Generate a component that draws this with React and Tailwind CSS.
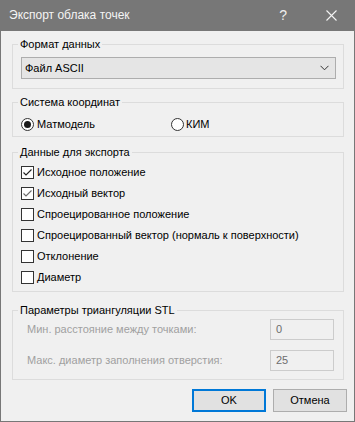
import React from "react";

const font = { fontFamily: '"Liberation Sans", Arial, sans-serif' };

function Check({ checked, light }) {
  return (
    <span className="w-[13px] h-[13px] border border-[#333333] bg-white flex items-center justify-center shrink-0">
      {checked && (
        <svg width="11" height="11" viewBox="0 0 11 11">
          <path d="M1.5 5.5 L4 8 L9.5 2.5" fill="none" stroke={light ? "#6b6b6b" : "#202020"} strokeWidth="1.1" />
        </svg>
      )}
    </span>
  );
}

function CheckRow({ label, checked, light }) {
  return (
    <div className="h-[21px] flex items-center">
      <Check checked={checked} light={light} />
      <span className="ml-[3px]">{label}</span>
    </div>
  );
}

function Radio({ checked }) {
  return (
    <span className="w-[13px] h-[13px] rounded-full border border-[#333333] bg-white flex items-center justify-center shrink-0">
      {checked && <span className="w-[7px] h-[7px] rounded-full bg-[#1a1a1a]" />}
    </span>
  );
}

function Group({ title, className, children }) {
  return (
    <fieldset className={"border border-[#dcdcdc] w-[332px] pl-[8px] pr-[7px] " + className}>
      <legend className="ml-[-3px] px-[2px] leading-[15px]">{title}</legend>
      {children}
    </fieldset>
  );
}

export default function App() {
  return (
    <div className="w-[355px] h-[422px] bg-[#f0f0f0] border-x border-b border-[#777777] flex flex-col text-[11px] text-black leading-[15px]" style={font}>
      <div className="h-[31px] bg-[#777777] flex items-center shrink-0 text-[#f4f4f4] text-[12px]">
        <span className="ml-[8px]">Экспорт облака точек</span>
        <span className="ml-auto mr-[39px] text-[14px] text-[#eeeeee]">?</span>
        <svg className="mr-[17px]" width="11" height="11" viewBox="0 0 11 11">
          <path d="M0.5 0.5 L10.5 10.5 M10.5 0.5 L0.5 10.5" stroke="#f4f4f4" strokeWidth="1.1" />
        </svg>
      </div>

      <div className="pl-[11px] flex flex-col">
        <Group title="Формат данных" className="mt-[6px] pt-[5px] pb-[9px]">
          <div className="h-[22px] border border-[#adadad] bg-[#e5e5e5] flex items-center pl-[3px] pr-[6px]">
            <span>Файл ASCII</span>
            <svg className="ml-auto" width="9" height="6" viewBox="0 0 9 6">
              <path d="M0.5 0.8 L4.5 4.8 L8.5 0.8" fill="none" stroke="#333333" strokeWidth="1" />
            </svg>
          </div>
        </Group>

        <Group title="Система координат" className="mt-[6px] pt-[4px] pb-[2px]">
          <div className="h-[20px] flex items-center">
            <div className="w-[150px] flex items-center">
              <Radio checked />
              <span className="ml-[3px]">Матмодель</span>
            </div>
            <Radio />
            <span className="ml-[2px]">КИМ</span>
          </div>
        </Group>

        <Group title="Данные для экспорта" className="mt-[8px] pt-[2px] pb-[3px]">
          <CheckRow label="Исходное положение" checked />
          <CheckRow label="Исходный вектор" checked light />
          <CheckRow label="Спроецированное положение" />
          <CheckRow label="Спроецированный вектор (нормаль к поверхности)" />
          <CheckRow label="Отклонение" />
          <CheckRow label="Диаметр" />
        </Group>

        <Group title="Параметры триангуляции STL" className="mt-[11px] pt-[1px] pb-[8px] pr-[9px]">
          <div className="flex flex-col gap-[10px] text-[#a0a0a0]">
            <div className="flex items-center h-[21px]">
              <span className="ml-[6px]">Мин. расстояние между точками:</span>
              <span className="ml-auto w-[64px] h-[21px] border border-[#cccccc] flex items-center pl-[5px] text-[#6d6d6d]">0</span>
            </div>
            <div className="flex items-center h-[21px]">
              <span className="ml-[6px]">Макс. диаметр заполнения отверстия:</span>
              <span className="ml-auto w-[64px] h-[21px] border border-[#cccccc] flex items-center pl-[5px] text-[#6d6d6d]">25</span>
            </div>
          </div>
        </Group>

        <div className="flex justify-end gap-[7px] mt-[9px] mr-[7px]">
          <button className="w-[74px] h-[23px] border-2 border-[#0078d7] bg-[#e1e1e1] flex items-center justify-center">OK</button>
          <button className="w-[74px] h-[23px] border border-[#adadad] bg-[#e1e1e1] flex items-center justify-center">Отмена</button>
        </div>
      </div>
    </div>
  );
}
